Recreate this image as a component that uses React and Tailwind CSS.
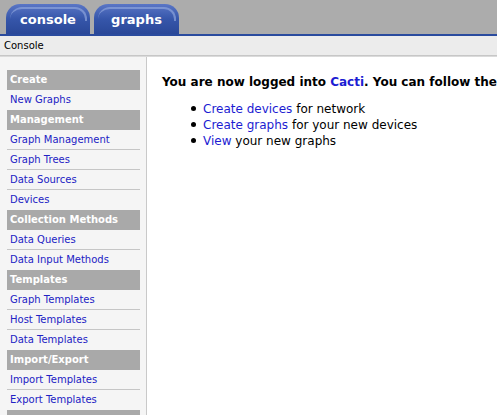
import clsx from 'clsx'

const MENU = [
  { title: 'Create', items: ['New Graphs'] },
  { title: 'Management', items: ['Graph Management', 'Graph Trees', 'Data Sources', 'Devices'] },
  { title: 'Collection Methods', items: ['Data Queries', 'Data Input Methods'] },
  { title: 'Templates', items: ['Graph Templates', 'Host Templates', 'Data Templates'] },
  { title: 'Import/Export', items: ['Import Templates', 'Export Templates'] },
  { title: 'Configuration', items: ['Settings'] },
]

function Tab({ label, width }) {
  return (
    <div
      className={clsx(
        'relative h-[30px] rounded-t-[14px] bg-gradient-to-b from-[#5a76c6] via-[#3656aa] to-[#2a4898] flex items-center justify-center text-white font-bold text-[13px] pt-[1px]',
        width
      )}
    >
      {/* top highlight arc */}
      <div className="absolute top-[3px] left-[4px] right-[3px] h-[14px] rounded-t-[12px] border-t-2 border-r-2 border-[#8ea4dc]/70" />
      <span className="relative">{label}</span>
    </div>
  )
}

export default function App() {
  return (
    <div className="w-full h-[415px] overflow-hidden flex flex-col bg-white font-['DejaVu_Sans','Liberation_Sans',sans-serif]">

      {/* Tabs */}
      <div className="h-[34px] bg-[#acacac] flex items-end gap-[4px] pl-[6px] flex-shrink-0">
        <Tab label="console" width="w-[84px]" />
        <Tab label="graphs" width="w-[85px]" />
      </div>
      <div className="h-[2px] bg-[#2a4b9e] flex-shrink-0" />

      {/* Breadcrumb */}
      <div className="h-[19px] bg-[#ececec] flex items-center px-[4px] text-[10px] text-black flex-shrink-0">
        Console
      </div>
      <div className="h-[2px] bg-gradient-to-b from-[#bdbdbd] to-[#e4e4e4] flex-shrink-0" />

      <div className="flex flex-1 min-h-0">
        {/* Sidebar */}
        <div className="w-[147px] flex-shrink-0 bg-[#f5f5f5] border-r border-[#c9c9c9] pt-[13px] pl-[7px] pr-[6px]">
          {MENU.map(g => (
            <div key={g.title}>
              <div className="h-[20px] bg-[#a9a9a9] text-white font-bold text-[10px] leading-[20px] pl-[3px] whitespace-nowrap">
                {g.title}
              </div>
              {g.items.map((it, i) => (
                <div
                  key={it}
                  className={clsx(
                    'h-[20px] leading-[20px] pl-[3px] text-[10px] text-[#2222c4] whitespace-nowrap',
                    i < g.items.length - 1 && 'border-b border-[#c6c6c6]'
                  )}
                >
                  {it}
                </div>
              ))}
            </div>
          ))}
        </div>

        {/* Main */}
        <div className="flex-1 min-w-0 pl-[15px] pt-[17px] overflow-hidden">
          <p className="text-[12px] leading-[16px] font-bold text-black whitespace-nowrap">
            You are now logged into <span className="text-[#1c1cd2]">Cacti</span>. You can follow these basic steps to get started.
          </p>
          <ul className="mt-[11px] pl-[29px] text-[12px] leading-[16px] text-black">
            {[
              ['Create devices', 'for network'],
              ['Create graphs', 'for your new devices'],
              ['View', 'your new graphs'],
            ].map(([a, b]) => (
              <li key={a} className="whitespace-nowrap">
                <span className="inline-block w-[5px] h-[5px] rounded-full bg-black mr-[7px] align-middle mb-[2px]" />
                <span className="text-[#1c1cd2]">{a}</span> {b}
              </li>
            ))}
          </ul>
        </div>
      </div>
    </div>
  )
}
